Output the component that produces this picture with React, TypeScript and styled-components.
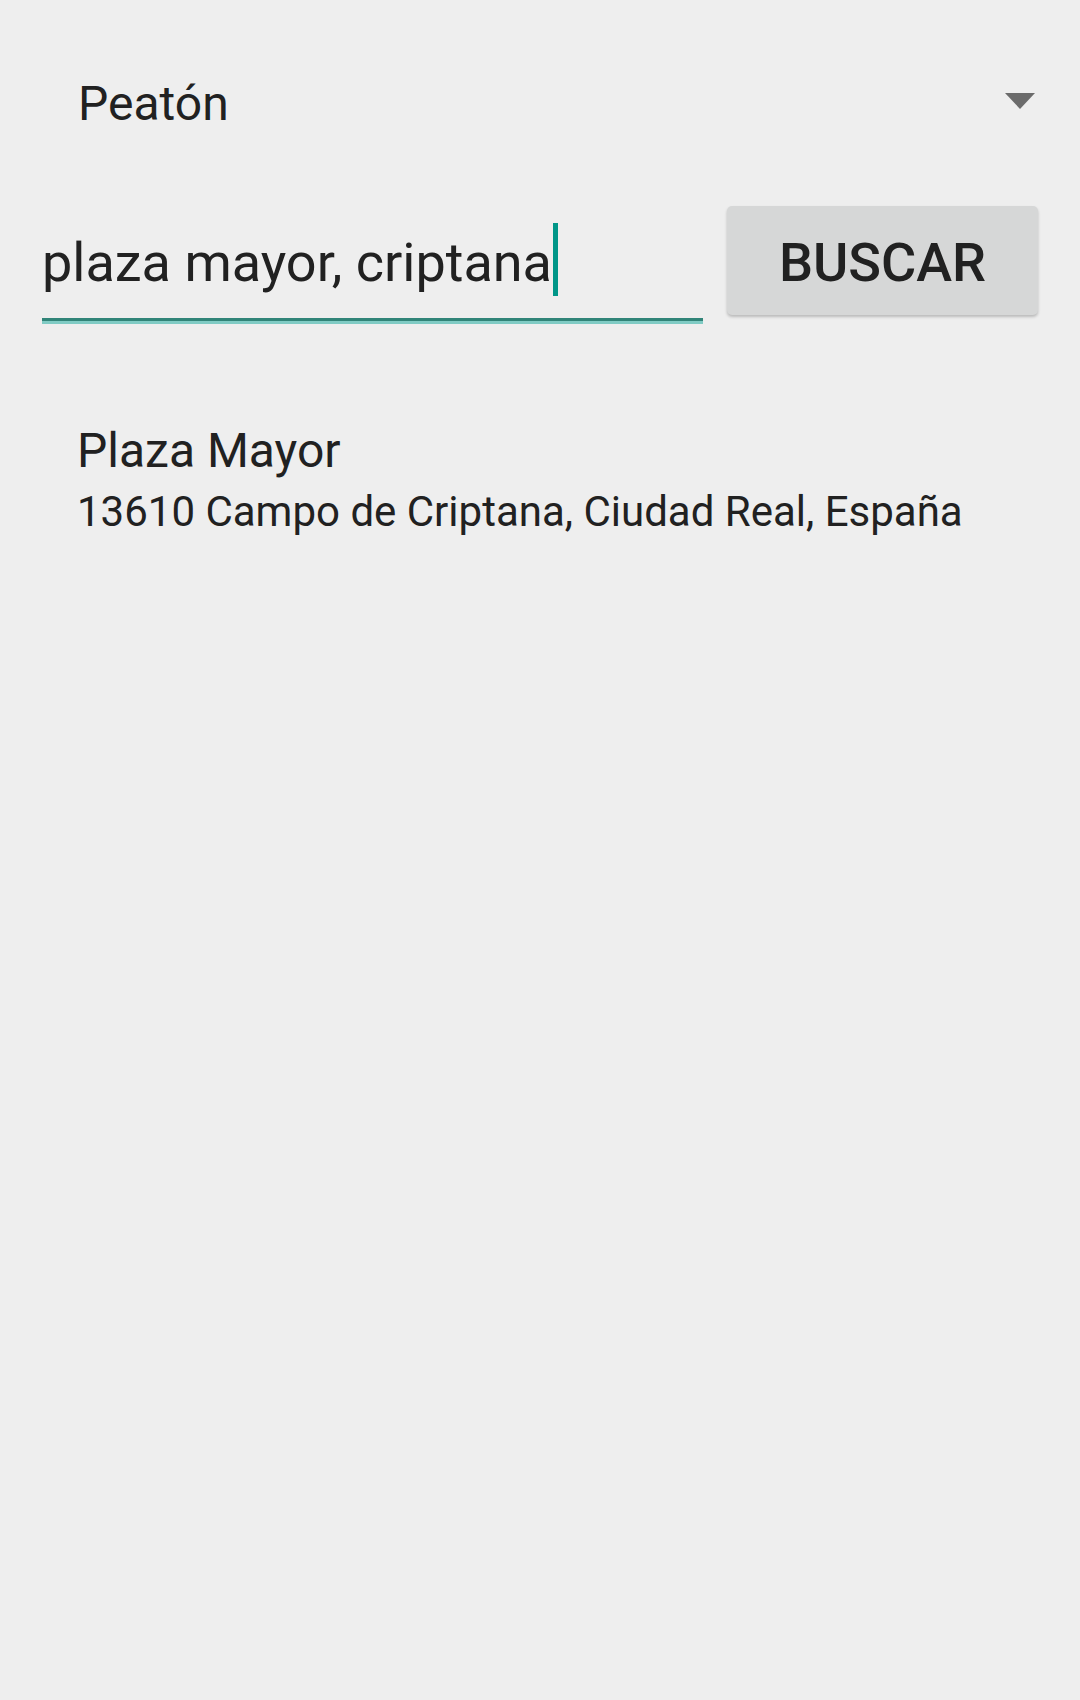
import React from 'react'
import styled, { createGlobalStyle } from 'styled-components'

const GlobalStyle = createGlobalStyle`
    html, body {
        margin: 0;
        padding: 0;
        background: #eeeeee;
    }
    body {
        font-family: Roboto, "Noto Sans", "Liberation Sans", sans-serif;
        color: #212121;
    }
`

const App: React.FC = () => {
    return (
        <Screen>
            <GlobalStyle />
            <Spinner>
                <SpinnerText>Peatón</SpinnerText>
                <DropArrow viewBox="0 0 30 16">
                    <polygon points="0,0 30,0 15,16" />
                </DropArrow>
            </Spinner>

            <SearchRow>
                <SearchField>
                    plaza mayor, criptana<Caret />
                </SearchField>
                <SearchButton>BUSCAR</SearchButton>
            </SearchRow>

            <ResultList>
                <ResultItem>
                    <ResultTitle>Plaza Mayor</ResultTitle>
                    <ResultAddress>13610 Campo de Criptana, Ciudad Real, España</ResultAddress>
                </ResultItem>
            </ResultList>
        </Screen>
    )
}

export default App

const Screen = styled.div`
    width: 1080px;
    min-height: 1700px;
    background: #eeeeee;
    display: flex;
    flex-direction: column;
`

const Spinner = styled.div`
    margin-top: 44px;
    height: 120px;
    display: flex;
    align-items: flex-start;
    justify-content: space-between;
    padding: 30px 45px 0 78px;
    box-sizing: border-box;
`

const SpinnerText = styled.div`
    font-size: 48px;
    line-height: 60px;
`

const DropArrow = styled.svg`
    width: 30px;
    height: 16px;
    margin-top: 19px;
    fill: #6b6b6b;
`

const SearchRow = styled.div`
    margin-top: 42px;
    display: flex;
    align-items: flex-start;
    gap: 24px;
    padding-left: 42px;
`

const SearchField = styled.div`
    width: 661px;
    box-sizing: border-box;
    padding: 22px 0 20px;
    font-size: 54px;
    line-height: 70px;
    white-space: nowrap;
    border-bottom: 3px solid #318478;
    box-shadow: 0 3px 0 #80cbc4;
`

const Caret = styled.span`
    display: inline-block;
    width: 5px;
    height: 73px;
    margin-left: 1px;
    margin-top: -10px;
    vertical-align: -15px;
    background: #009688;
`

const SearchButton = styled.button`
    width: 311px;
    height: 109px;
    border: none;
    border-radius: 5px;
    background: #d6d7d7;
    box-shadow: 0 2px 3px rgba(0, 0, 0, 0.22);
    font-family: Roboto, "Noto Sans", "Liberation Sans", sans-serif;
    font-weight: 500;
    font-size: 54px;
    color: #212121;
    display: flex;
    align-items: center;
    justify-content: center;
    padding: 4px 0 0;
`

const ResultList = styled.div`
    margin-top: 100px;
    display: flex;
    flex-direction: column;
`

const ResultItem = styled.div`
    padding-left: 77px;
    display: flex;
    flex-direction: column;
    gap: 5px;
`

const ResultTitle = styled.div`
    font-size: 48px;
    line-height: 60px;
`

const ResultAddress = styled.div`
    font-size: 42px;
    line-height: 52px;
`
